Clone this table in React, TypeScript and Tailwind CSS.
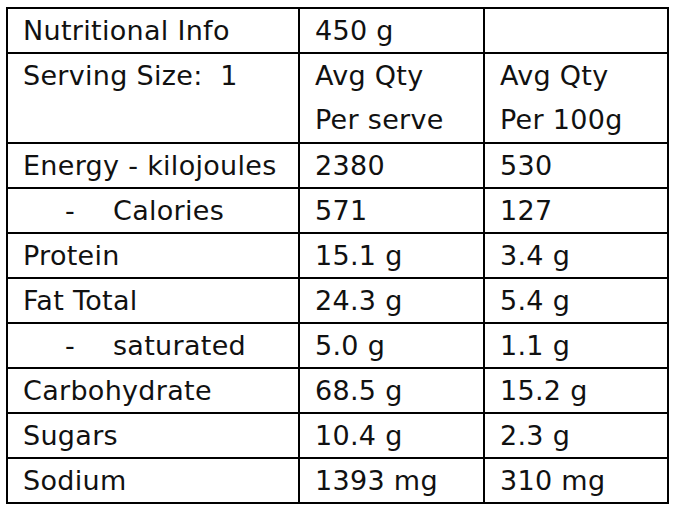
const rows: { label: string; sub?: boolean; serve: string; per100: string }[] = [
  { label: "Energy - kilojoules", serve: "2380", per100: "530" },
  { label: "Calories", sub: true, serve: "571", per100: "127" },
  { label: "Protein", serve: "15.1 g", per100: "3.4 g" },
  { label: "Fat Total", serve: "24.3 g", per100: "5.4 g" },
  { label: "saturated", sub: true, serve: "5.0 g", per100: "1.1 g" },
  { label: "Carbohydrate", serve: "68.5 g", per100: "15.2 g" },
  { label: "Sugars", serve: "10.4 g", per100: "2.3 g" },
  { label: "Sodium", serve: "1393 mg", per100: "310 mg" },
];

const cell = "border-2 border-black pl-[15px] pr-1 py-0 align-top whitespace-nowrap";

export default function App() {
  return (
    <div className="w-[682px] h-[512px] bg-white pt-[7px] pl-[6px] text-[#111] font-['DejaVu_Sans',sans-serif] text-[27px] tracking-[0.3px] leading-[43px]">
      <table className="border-collapse table-fixed w-[661px]">
        <colgroup>
          <col className="w-[292px]" />
          <col className="w-[185px]" />
          <col className="w-[184px]" />
        </colgroup>
        <tbody>
          <tr>
            <td className={cell}>Nutritional Info</td>
            <td className={cell}>450 g</td>
            <td className={cell}></td>
          </tr>
          <tr className="leading-[44px]">
            <td className={cell}>Serving Size:&nbsp; 1</td>
            <td className={cell}>
              Avg Qty
              <br />
              Per serve
            </td>
            <td className={cell}>
              Avg Qty
              <br />
              Per 100g
            </td>
          </tr>
          {rows.map((r) => (
            <tr key={r.label}>
              <td className={cell}>
                {r.sub ? (
                  <span className="flex">
                    <span className="pl-[42px] w-[90px]">-</span>
                    <span>{r.label}</span>
                  </span>
                ) : (
                  r.label
                )}
              </td>
              <td className={cell}>{r.serve}</td>
              <td className={cell}>{r.per100}</td>
            </tr>
          ))}
        </tbody>
      </table>
    </div>
  );
}
